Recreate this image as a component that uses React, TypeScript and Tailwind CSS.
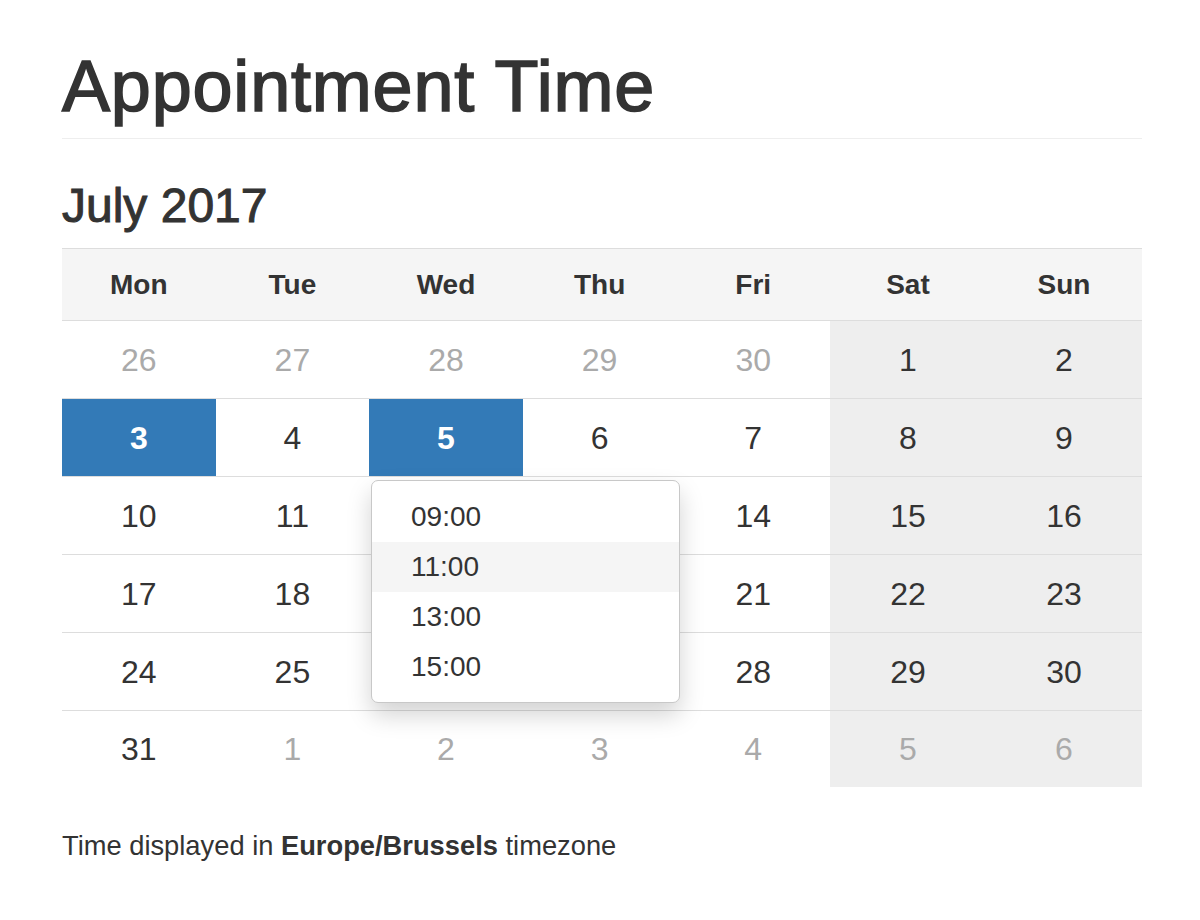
const weeks: [number, boolean][][] = [
  [[26, true], [27, true], [28, true], [29, true], [30, true], [1, false], [2, false]],
  [[3, false], [4, false], [5, false], [6, false], [7, false], [8, false], [9, false]],
  [[10, false], [11, false], [12, false], [13, false], [14, false], [15, false], [16, false]],
  [[17, false], [18, false], [19, false], [20, false], [21, false], [22, false], [23, false]],
  [[24, false], [25, false], [26, false], [27, false], [28, false], [29, false], [30, false]],
  [[31, false], [1, true], [2, true], [3, true], [4, true], [5, true], [6, true]],
]

const days = ['Mon', 'Tue', 'Wed', 'Thu', 'Fri', 'Sat', 'Sun']
const times = ['09:00', '11:00', '13:00', '15:00']

export default function App() {
  return (
    <div className="min-h-screen bg-white font-['Liberation_Sans',Arial,sans-serif] text-[#333]">
      <div className="ml-[62px] w-[1080px] pt-[47px]">
        {/* Page header */}
        <div className="border-b border-[#eee] pb-[12px]">
          <h1 className="text-[72px] leading-[79px] tracking-[0.8px] [-webkit-text-stroke:1.6px_#333]">
            Appointment Time
          </h1>
        </div>

        <h3 className="mt-[40px] text-[48px] leading-[53px] [-webkit-text-stroke:1px_#333]">July 2017</h3>

        {/* Calendar */}
        <div className="relative mt-[16px]">
          <div className="grid h-[73px] grid-cols-[repeat(5,153.6px)_1fr_1fr] border-y border-[#ddd] bg-[#f5f5f5]">
            {days.map((day) => (
              <div key={day} className="flex items-center justify-center text-[28px] font-bold">
                {day}
              </div>
            ))}
          </div>

          {weeks.map((week, i) => (
            <div
              key={i}
              className={`grid grid-cols-[repeat(5,153.6px)_1fr_1fr] ${i < weeks.length - 1 ? 'h-[78px] border-b border-[#ddd]' : 'h-[76px]'}`}
            >
              {week.map(([n, muted], j) => {
                const selected = i === 1 && (j === 0 || j === 2)
                const weekend = j >= 5
                // cells hidden behind the time dropdown
                const covered = i >= 2 && i <= 4 && (j === 2 || j === 3)
                return (
                  <div
                    key={j}
                    className={`flex items-center justify-center text-[32px] ${
                      selected
                        ? 'bg-[#337ab7] font-bold text-white'
                        : weekend
                          ? 'bg-[#eee]'
                          : ''
                    } ${muted ? 'text-[#aaa]' : ''}`}
                  >
                    {covered ? null : n}
                  </div>
                )
              })}
            </div>
          ))}

          {/* Time dropdown */}
          <div className="absolute left-[309px] top-[232px] w-[309px] rounded-[7px] border border-[#c8c8c8] bg-white pt-[11px] pb-[10px] shadow-[0_12px_24px_rgba(0,0,0,0.175)]">
            {times.map((t) => (
              <div
                key={t}
                className={`flex h-[50px] items-center pl-[39px] text-[28px] ${t === '11:00' ? 'bg-[#f5f5f5]' : ''}`}
              >
                {t}
              </div>
            ))}
          </div>
        </div>

        <p className="mt-[39px] text-[27.3px] leading-[40px]">
          Time displayed in <b>Europe/Brussels</b> timezone
        </p>
      </div>
    </div>
  )
}
